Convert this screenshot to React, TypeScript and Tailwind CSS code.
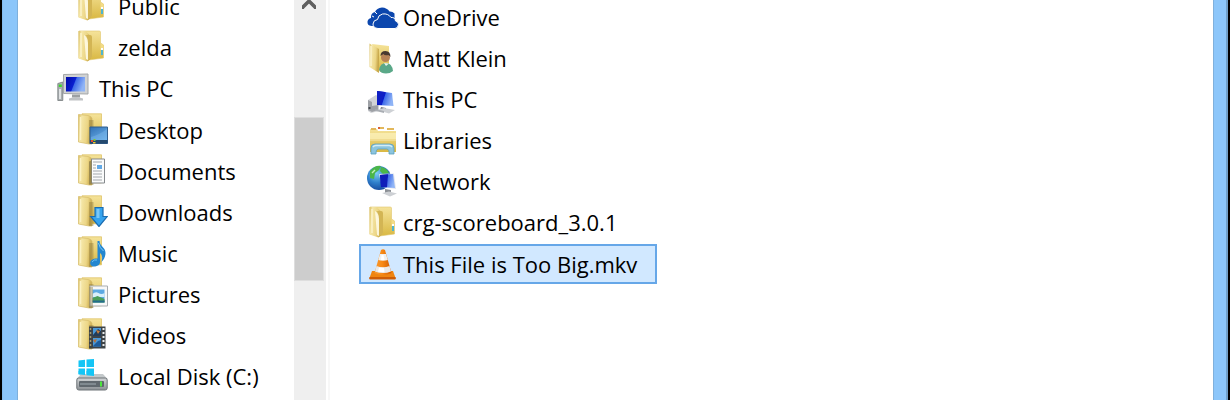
import type { ReactNode } from 'react';
import clsx from 'clsx';

// ── Shared gradients ──────────────────────────────────────────────

function Gradients() {
  return (
    <svg className="absolute h-0 w-0" aria-hidden="true">
      <defs>
        <linearGradient id="flap" x1="0" y1="0" x2="1" y2="0.2">
          <stop offset="0" stopColor="#d8bd62" />
          <stop offset="0.25" stopColor="#f5e6a6" />
          <stop offset="0.7" stopColor="#ecd686" />
          <stop offset="1" stopColor="#c9a94b" />
        </linearGradient>
        <linearGradient id="folderBack" x1="0" y1="0" x2="0" y2="1">
          <stop offset="0" stopColor="#f5e39a" />
          <stop offset="1" stopColor="#d9b843" />
        </linearGradient>
        <linearGradient id="screen" x1="0" y1="0" x2="1" y2="0.3">
          <stop offset="0" stopColor="#0008a8" />
          <stop offset="0.5" stopColor="#0a1fd0" />
          <stop offset="0.55" stopColor="#3f6be8" />
          <stop offset="1" stopColor="#8fb4f6" />
        </linearGradient>
        <linearGradient id="metal" x1="0" y1="0" x2="0" y2="1">
          <stop offset="0" stopColor="#d3d6d8" />
          <stop offset="1" stopColor="#8b9094" />
        </linearGradient>
        <linearGradient id="sky" x1="0" y1="0" x2="0.6" y2="1">
          <stop offset="0" stopColor="#2f6fb4" />
          <stop offset="1" stopColor="#6fb4ec" />
        </linearGradient>
        <radialGradient id="globe" cx="0.4" cy="0.3" r="0.8">
          <stop offset="0" stopColor="#7fd0f5" />
          <stop offset="0.5" stopColor="#2f7fcb" />
          <stop offset="1" stopColor="#123f94" />
        </radialGradient>
        <linearGradient id="cone" x1="0" y1="0" x2="1" y2="0">
          <stop offset="0" stopColor="#f59a35" />
          <stop offset="0.45" stopColor="#f98a14" />
          <stop offset="1" stopColor="#d05a02" />
        </linearGradient>
      </defs>
    </svg>
  );
}

// ── Icons ─────────────────────────────────────────────────────────

function Icon({ children }: { children: ReactNode }) {
  return (
    <svg width="32" height="32" viewBox="0 0 32 32" fill="none" className="shrink-0" aria-hidden="true">
      {children}
    </svg>
  );
}

function FolderIcon() {
  return (
    <Icon>
      <path d="M3 1h20q1.500 0 1.500 1v11l3 2v13l-15 2L3 28z" fill="url(#folderBack)" stroke="#e0c66c" strokeWidth="0.6" />
      <path d="M2.500 1h7l5 5v23l-3 2.500-9-3z" fill="url(#flap)" />
      <path d="M9 7q0-2 2-2h3q2 0 2 2v20l-4 4V13z" fill="#d3b554" />
      <path d="M8 5q4 2 4 8v17l-2-1z" fill="#fffbe6" opacity="0.9" />
      <path d="M5 3v24" stroke="#fbf2c8" strokeWidth="1.500" />
      <path d="M24.500 13.500l3 1.500v5h-3z" fill="#f3dc87" />
      <path d="M25 20h2v5h-2z" fill="#4fb5cf" />
      <path d="M25 18h2v2h-2z" fill="#fff" />
    </Icon>
  );
}

// Open folder that the known folders draw their emblem over
function OpenFolder({ children }: { children: ReactNode }) {
  return (
    <Icon>
      <path d="M6 .8h19.500v28H6z" fill="url(#folderBack)" stroke="#dfc468" strokeWidth="0.8" />
      <path d="M2.500 1.500l9.500 1q3.500.5 4 3v25.500h-3L2.500 29z" fill="url(#flap)" stroke="#d9c071" strokeWidth="0.8" />
      <path d="M4.500 4v23" stroke="#fbf1c4" strokeWidth="1.500" />
      <path d="M13 7h4.500v24H13z" fill="#7d6a30" opacity="0.35" />
      {children}
    </Icon>
  );
}

function DesktopIcon() {
  return (
    <OpenFolder>
      <path d="M14 14h17.500v16.500H14z" fill="url(#sky)" stroke="#315f8e" />
      <path d="M15 24q8-2 16-8v11H15z" fill="#7db8ea" opacity="0.45" />
      <path d="M14 27h17.500v3.500H14z" fill="#24496e" />
      <path d="M15 27h2v2h-2z" fill="#e7482c" />
      <path d="M17.500 26h2v2h-2z" fill="#7cc82f" />
      <path d="M17 29h2.500v1.500H17z" fill="#f3c42d" />
    </OpenFolder>
  );
}

function DocumentsIcon() {
  return (
    <OpenFolder>
      <path d="M15.500 5h13v24h-13z" fill="#fafbfb" stroke="#85898c" />
      <path d="M17 8h9M17 17h9M17 20h9M17 23h9M17 26h9" stroke="#a3a8ac" />
      <path d="M17 11h3M17 14h3" stroke="#a3a8ac" />
      <path d="M21 11h5v4h-5z" fill="#62a9e6" />
      <path d="M13 8l3-2v24h-3z" fill="#8d8050" opacity="0.6" />
    </OpenFolder>
  );
}

function DownloadsIcon() {
  return (
    <OpenFolder>
      <path
        d="M19 12.500h8v9h4.300L23 31.500l-8.300-10H19z"
        fill="#35a3ee"
        stroke="#1c6cb0"
        strokeWidth="1.200"
      />
      <path d="M20.500 14h3v9h-3z" fill="#79c7f8" />
    </OpenFolder>
  );
}

function MusicIcon() {
  return (
    <OpenFolder>
      <path
        d="M21.500 5h2c0 5 6 6 6 12 0 4-2 7-4 9 1-4 1-7-1.500-9v9c0 3-3 4.500-6 4.500-5 0-5.500-7 1-8 1-.2 2.500 0 2.500 0z"
        fill="#2487d0"
      />
      <path d="M16 26q2-3 5-2" stroke="#70bff0" />
      <path d="M22.500 7q1 5 5 8" stroke="#7fcaf5" />
    </OpenFolder>
  );
}

function PicturesIcon() {
  return (
    <OpenFolder>
      <path d="M14 9h17.500v20H14z" fill="#f8f8f8" stroke="#a9adb0" />
      <path d="M16.500 12.500h12v13h-12z" fill="#5da9e2" />
      <path d="M16.500 17q3-3 6-1t6 0v4h-12z" fill="#d8effa" />
      <path d="M16.500 21l5-2 7 3v3.500h-12z" fill="#4a9e58" />
      <path d="M16.500 23.500h12v2h-12z" fill="#246b8c" />
      <path d="M13 10h4v21h-4z" fill="#998c58" opacity="0.5" />
    </OpenFolder>
  );
}

function VideosIcon() {
  return (
    <OpenFolder>
      <path d="M13 8.500h16.500v22H13z" fill="#3d4347" />
      <path d="M17 10h8v8h-8zM17 20h8v8.500h-8z" fill="#4b99d8" />
      <path d="M17 17l5-6 3 2v5h-8z" fill="#213c59" />
      <path d="M20 12l4 1-2 3z" fill="#c67d3b" />
      <path d="M17 28l5-5 3-1v6.500h-8z" fill="#1e5c9b" />
      <path d="M17 22l4-1-2 4z" fill="#b5733c" />
      <path d="M27.500 10v20" stroke="#e9ecee" strokeWidth="2" strokeDasharray="2 2" />
      <path d="M14.500 10v20" stroke="#a59a70" strokeWidth="1.500" strokeDasharray="2 2" />
    </OpenFolder>
  );
}

function DiskIcon() {
  return (
    <Icon>
      <path d="M2.500 1.500L9 .8V8H2.500zM10.500.6L18 0v8h-7.500zM2.500 9.500H9V16l-6.500-.7zM10.500 9.500H18V17l-7.500-.8z" fill="#14c5f5" />
      <path d="M5 15h22l4.500 5H.5z" fill="#c3c8ca" />
      <path d="M2.500 12H9v4l-6.500-.7zM10.500 12H18v5l-7.500-.8z" fill="#14c5f5" />
      <rect x="0.800" y="19" width="30.400" height="12" rx="2" fill="url(#metal)" stroke="#6d7377" />
      <rect x="3" y="22" width="25" height="6" rx="1" fill="#60686e" />
      <path d="M4 25h16" stroke="#8b969c" strokeWidth="1.500" />
      <path d="M24 22.500h2v5h-2z" fill="#4de63c" />
    </Icon>
  );
}

function ComputerIcon() {
  return (
    <Icon>
      <path d="M.8 12.500l5-1.500v18.500H.8z" fill="#a9aeb0" stroke="#777c7e" strokeWidth="0.800" />
      <path d="M1.800 13.500h3v2.500h-3z" fill="#3dd82c" />
      <path d="M2 18h2v10H2z" fill="#dfe2e3" />
      <path d="M6.500 3.500l24.500-.5v20l-24.500-.5z" fill="#d0d2d3" stroke="#a4a7a8" />
      <path d="M9 6h19v14.500H9z" fill="url(#screen)" />
      <path d="M15 23.500h8v3h-8z" fill="#9ca0a2" />
      <path d="M12 27.500q7-3 14 0v2H12z" fill="#bfc2c4" />
    </Icon>
  );
}

function OneDriveIcon() {
  return (
    <Icon>
      <path
        d="M9 25H4.500Q0 24.500.5 20.500 1 17.500 4 17q-.5-5 4-6 1.500-4 7-4.500 5 .3 7.500 4 3-.2 5 2v6H12z"
        fill="#0b46ad"
      />
      <path
        d="M11 27.500q-5-.5-5-4.500.3-4 4.500-4.500.5-4.500 5-5.500 5.500-.8 8.500 3.500 4-.5 4.500 3.500 3 1 3 3.500-.5 3.800-3.500 4z"
        fill="#0b46ad"
        stroke="#fff"
        strokeWidth="1"
      />
      <path d="M5 15l2 1M8 11l2 2" stroke="#fff" />
    </Icon>
  );
}

function UserFolderIcon() {
  return (
    <Icon>
      <path d="M5 2l17 2v21l-9 5z" fill="url(#folderBack)" />
      <path d="M2.500 1.500L12 7v24L2.500 25z" fill="url(#flap)" />
      <path d="M4 4v20" stroke="#fbf2ca" strokeWidth="1.500" />
      <circle cx="18.500" cy="15.500" r="4.500" fill="#b78356" />
      <path d="M13.500 14q0-5 5-5t5 6l-2-2q-4 1-5-1z" fill="#493a30" />
      <path d="M12 28q1-7 7-7 6 0 7 8-3 2.500-7 2.500-5 0-7-3.500z" fill="#5aa888" />
      <path d="M17 21l2 3 3-2.500z" fill="#e8f2ec" />
    </Icon>
  );
}

function DesktopComputerIcon() {
  return (
    <Icon>
      <path d="M1 17l8-5 3 2v14l-8 2-3-2z" fill="#d2d4d7" />
      <path d="M1 17l4 2v10l-4-2zM5 23l6-1v5l-6 2z" fill="#9ea1a6" />
      <path d="M1.500 24h2v2h-2z" fill="#44484e" />
      <path d="M10 8l15 2 1.500 13L10 22z" fill="url(#screen)" />
      <path d="M10 8l8 1-4 12.500-4-1z" fill="#101fc4" />
      <path d="M14 24l5 1v3l-6-1z" fill="#787c82" />
      <path d="M10 27l7-2 11 2-6 3.500z" fill="#ced1d5" />
      <path d="M8 26l9 2v2l-8-2z" fill="#a9adb3" />
    </Icon>
  );
}

function LibrariesIcon() {
  return (
    <Icon>
      <path d="M3 5h7l1 2h18v21H3z" fill="url(#folderBack)" />
      <path d="M4 5h5M12 4h5M20 5h7" stroke="#e2b75a" strokeWidth="2" />
      <path d="M11 3h2v2h-2z" fill="#da6238" />
      <path d="M3 9h26v8H3z" fill="#fbf0b8" opacity="0.8" />
      <path d="M3 16h26" stroke="#e8ce78" />
      <path
        d="M4 30v-6q0-4 4-4h15q4 0 4 4v6h-5q.5-5-2.500-5h-8Q9 25 9 30z"
        fill="#8cc5de"
        stroke="#5a9fbe"
        strokeWidth="0.800"
      />
      <path d="M6 23q1-1.500 3-1.500h13q2 0 3 1.500" stroke="#d3edf6" strokeWidth="1.500" />
    </Icon>
  );
}

function NetworkIcon() {
  return (
    <Icon>
      <circle cx="12" cy="13" r="12" fill="url(#globe)" />
      <path d="M3 6q5-6 11-5l-2 4-4 3-1 6-4-1zM14 2q6 1 8 6l-6 1-3-3z" fill="#4bb649" />
      <path d="M5 8l3-3" stroke="#c4f2b4" strokeWidth="1.500" />
      <path d="M12 9l15-.5L29 24l-14-2z" fill="#e1e4ec" />
      <path d="M13 10l13-1 2 14-14-1z" fill="url(#screen)" />
      <path d="M13 10l8-.8-1 13-6-.8z" fill="#101db9" />
      <path d="M18 24l6 1v3h-6z" fill="#8c9096" />
      <path d="M15 28l7-1.500 8 2-7 3z" fill="#cdd0d4" />
    </Icon>
  );
}

function ConeIcon() {
  return (
    <Icon>
      <path d="M5 23h21l2.500 7q.3 1-1 1h-24q-1.300 0-1-1z" fill="#ef8511" />
      <path d="M2.500 29h26l.3 1.500q0 1-1 1H3.200q-1 0-1-1z" fill="#cf5d05" />
      <path d="M14 2q2-1.500 4 0l6.500 23q-8.500 4-17 0z" fill="url(#cone)" />
      <path d="M13 6h6l1.800 6q-4.800 1.500-9.500 0z" fill="#f0f0ee" />
      <path d="M9.500 18q6.500 2.500 13 0l1.500 5.500q-8 3-16 0z" fill="#e9e9e8" />
      <path d="M14.500 7h2l1 5h-3.500zM12 19.500l5 .3.500 4.500-6.500-.5z" fill="#fff" />
    </Icon>
  );
}

// ── Data ──────────────────────────────────────────────────────────

interface Item {
  label: string;
  icon: ReactNode;
}

const userFolders: Item[] = [
  { label: 'Public', icon: <FolderIcon /> },
  { label: 'zelda', icon: <FolderIcon /> },
];

const pcFolders: Item[] = [
  { label: 'Desktop', icon: <DesktopIcon /> },
  { label: 'Documents', icon: <DocumentsIcon /> },
  { label: 'Downloads', icon: <DownloadsIcon /> },
  { label: 'Music', icon: <MusicIcon /> },
  { label: 'Pictures', icon: <PicturesIcon /> },
  { label: 'Videos', icon: <VideosIcon /> },
  { label: 'Local Disk (C:)', icon: <DiskIcon /> },
];

const files: Item[] = [
  { label: 'OneDrive', icon: <OneDriveIcon /> },
  { label: 'Matt Klein', icon: <UserFolderIcon /> },
  { label: 'This PC', icon: <DesktopComputerIcon /> },
  { label: 'Libraries', icon: <LibrariesIcon /> },
  { label: 'Network', icon: <NetworkIcon /> },
  { label: 'crg-scoreboard_3.0.1', icon: <FolderIcon /> },
  { label: 'This File is Too Big.mkv', icon: <ConeIcon /> },
];

const SELECTED = 'This File is Too Big.mkv';

// ── Rows ──────────────────────────────────────────────────────────

function TreeRow({ label, icon }: Item) {
  return (
    <li>
      <button type="button" className="flex h-[38px] items-center gap-[10px] whitespace-nowrap">
        <span className="pb-[2px]">{icon}</span>
        {label}
      </button>
    </li>
  );
}

function FileRow({ label, icon }: Item) {
  const selected = label === SELECTED;
  return (
    <li>
      <button
        type="button"
        aria-pressed={selected}
        className={clsx(
          'flex items-center gap-1 border-2 pr-[18px] pl-[6px] whitespace-nowrap',
          selected ? 'h-10 border-[#66a7e8] bg-[#d1e8ff]' : 'h-[38px] border-transparent',
        )}
      >
        {icon}
        {label}
      </button>
    </li>
  );
}

// ── Window ────────────────────────────────────────────────────────

export default function App() {
  return (
    <div className="flex h-screen overflow-hidden bg-black px-[2px] font-['Open_Sans','Noto_Sans',sans-serif] text-[22px] leading-[30px] text-black">
      <Gradients />
      <div className="flex min-w-0 flex-1 border-r-2 border-l border-r-[#6f9fc9] border-l-[#84bdf0] bg-[#8cc6fa] pr-3 pl-[14px]">
        <div className="flex min-w-0 flex-1 border-x border-[#7fb0dc] bg-white">
          <nav aria-label="Folders" className="w-[276px] shrink-0 overflow-hidden">
            <ul className="-mt-[13px] flex flex-col gap-[3px] pl-[39px]">
              {userFolders.map((item) => (
                <li key={item.label} className="pl-[19px]">
                  <ul>
                    <TreeRow {...item} />
                  </ul>
                </li>
              ))}
              <TreeRow label="This PC" icon={<ComputerIcon />} />
              <li className="pt-px pl-[19px]">
                <ul className="flex flex-col gap-[3px]">
                  {pcFolders.map((item) => (
                    <TreeRow key={item.label} {...item} />
                  ))}
                </ul>
              </li>
            </ul>
          </nav>

          {/* Scrollbar */}
          <div className="flex w-8 shrink-0 flex-col bg-[#efefef] pr-[2px]">
            <button type="button" aria-label="Scroll up" className="flex h-[117px] justify-center">
              <svg width="16" height="12" viewBox="0 0 16 12" fill="none">
                <path d="M2 9V6l6-6 6 6v3" stroke="#606060" strokeWidth="2" />
                <path d="M2 7.500L8 1.500l6 6" stroke="#606060" strokeWidth="3" />
              </svg>
            </button>
            <div className="h-[164px] border border-[#dedede] bg-[#cdcdcd]" />
          </div>

          <main className="ml-[2px] min-w-0 flex-1 overflow-hidden border-l-2 border-[#f7f7f7] pl-[29px]">
            <ul className="-mt-[2px] flex flex-col gap-[3px]">
              {files.map((item) => (
                <FileRow key={item.label} {...item} />
              ))}
            </ul>
          </main>
        </div>
      </div>
    </div>
  );
}
